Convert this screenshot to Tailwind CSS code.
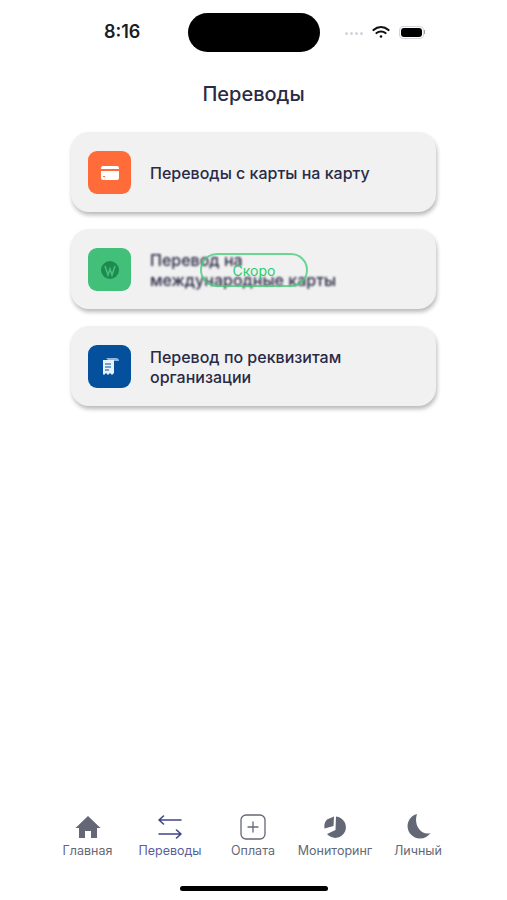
<!DOCTYPE html>
<html lang="ru">
<head>
  <meta charset="UTF-8">
  <meta name="viewport" content="width=device-width, initial-scale=1.0">
  <title>Переводы</title>
  <script src="https://cdn.jsdelivr.net/npm/@tailwindcss/browser@4"></script>
</head>
<body class="bg-white">
  <div class="h-[900px] w-[507px] flex flex-col font-['Inter','Roboto',sans-serif] overflow-hidden">
    <!-- Status bar -->
    <div class="h-[64px] pt-[13px] flex items-start shrink-0">
      <span class="w-[188px] pl-[104px] pt-[8px] text-[18px] leading-[22px] font-semibold text-[#1c1c22]">8:16</span>
      <div class="w-[132px] h-[39px] rounded-full bg-black"></div>
      <div class="flex items-center pl-[25px] pt-[6px] h-[32px]">
        <div class="flex gap-[2px] mr-[9px] mt-[2px]">
          <span class="w-[3px] h-[3px] rounded-full bg-gray-300"></span>
          <span class="w-[3px] h-[3px] rounded-full bg-gray-300"></span>
          <span class="w-[3px] h-[3px] rounded-full bg-gray-300"></span>
          <span class="w-[3px] h-[3px] rounded-full bg-gray-300"></span>
        </div>
        <svg class="w-[18px] h-[14px]" viewBox="0 0 18 14" fill="none" stroke="#111" stroke-width="2.2" stroke-linecap="round">
          <path d="M1.5 5C6 1 12 1 16.5 5"/>
          <path d="M4.5 8C7 6 11 6 13.5 8"/>
          <circle cx="9" cy="11.5" r="1.3" fill="#111" stroke="none"/>
        </svg>
        <div class="ml-[9px] w-[25px] h-[13px] rounded-[4px] border border-gray-300 p-[1px] flex items-center">
          <div class="w-full h-full rounded-[3px] bg-black"></div>
        </div>
        <div class="w-[1px] h-[4px] bg-gray-400"></div>
      </div>
    </div>

    <!-- Title -->
    <h1 class="h-[58px] pt-[15px] text-center text-[20px] leading-[30px] font-medium text-[#2a2a45] shrink-0">Переводы</h1>

    <!-- Cards -->
    <div class="ml-[71px] w-[365px] mt-[10px] flex flex-col gap-[17px] flex-1">
      <div class="h-[80px] rounded-[18px] bg-[#f1f1f2] shadow-[1px_3px_4px_rgba(0,0,0,0.28)] flex items-center pl-[17px] pr-[20px]">
        <div class="w-[43px] h-[43px] mt-[1px] rounded-[9px] bg-[#ff6c3a] flex items-center justify-center shrink-0">
          <svg class="w-[18px] h-[14px]" viewBox="0 0 18 14">
            <path fill="#fff" d="M2 0h14a2 2 0 0 1 2 2v1H0V2a2 2 0 0 1 2-2zM0 5h18v7a2 2 0 0 1-2 2H2a2 2 0 0 1-2-2z"/>
            <rect x="2" y="10" width="2" height="1" fill="#ff6c3a"/>
          </svg>
        </div>
        <span class="ml-[19px] mt-[2px] text-[16px] leading-[20px] font-medium text-[#2a2a45]">Переводы с карты на карту</span>
      </div>

      <div class="relative h-[80px] rounded-[18px] bg-[#f1f1f2] shadow-[1px_3px_4px_rgba(0,0,0,0.28)] flex items-center pl-[17px] pr-[20px]">
        <div class="w-[43px] h-[43px] mt-[1px] rounded-[9px] bg-[#42bf78] flex items-center justify-center shrink-0 blur-[0.6px]">
          <svg class="w-[20px] h-[20px]" viewBox="0 0 20 20">
            <circle cx="10" cy="10" r="9" fill="#1f8a50"/>
            <path d="M5 6l3 9 2-6 2 6 3-9" fill="none" stroke="#42bf78" stroke-width="1.6"/>
          </svg>
        </div>
        <span class="ml-[19px] mt-[2px] text-[16px] leading-[20px] font-medium text-[#2a2a45] blur-[1px]">Перевод на<br>международные карты</span>
        <div class="absolute left-[129px] top-[24px] w-[108px] h-[34px] rounded-full border-2 border-[#3ecb73]/75 flex items-center justify-center text-[14px] text-[#2ecb6a]">Скоро</div>
      </div>

      <div class="h-[80px] rounded-[18px] bg-[#f1f1f2] shadow-[1px_3px_4px_rgba(0,0,0,0.28)] flex items-center pl-[17px] pr-[20px]">
        <div class="w-[43px] h-[43px] mt-[1px] rounded-[9px] bg-[#04509c] flex items-center justify-center shrink-0">
          <svg class="w-[18px] h-[20px]" viewBox="0 0 18 20">
            <path fill="#8ab8e0" d="M5 1h10a3 3 0 0 1 3 3H8z"/>
            <path fill="#e8f0f8" d="M2 3h11v13l-2 2-2-2-2 2-2-2-2 2-1-1z"/>
            <path stroke="#04509c" stroke-width="1.2" d="M4 7h6M4 10h6M4 13h4"/>
          </svg>
        </div>
        <span class="ml-[19px] mt-[2px] text-[16px] leading-[20px] font-medium text-[#2a2a45]">Перевод по реквизитам<br>организации</span>
      </div>
    </div>

    <!-- Tab bar -->
    <div class="h-[47px] ml-[50px] w-[410px] grid grid-cols-[75px_90px_76px_88px_78px] shrink-0 text-[12.5px] leading-[16px] text-[#646876]">
      <div class="flex flex-col items-center">
        <svg class="w-[26px] h-[26px] mt-[1px]" viewBox="0 0 26 26" fill="#646876">
          <path d="M13 2L0.5 14h3.5v10h6v-7h6v7h6V14h3.5z"/>
        </svg>
        <span class="mt-[3px]">Главная</span>
      </div>
      <div class="flex flex-col items-center text-[#5a5f9a]">
        <svg class="w-[26px] h-[26px] mt-[1px]" viewBox="0 0 26 26" fill="none" stroke="#3f4488" stroke-width="1.6" stroke-linecap="round" stroke-linejoin="round">
          <path d="M24 6H2M6.5 2L2 6l4.5 4"/>
          <path d="M2 20h22M19.5 16l4.5 4-4.5 4"/>
        </svg>
        <span class="mt-[3px]">Переводы</span>
      </div>
      <div class="flex flex-col items-center">
        <svg class="w-[26px] h-[26px] mt-[1px]" viewBox="0 0 26 26" fill="none" stroke="#646876" stroke-width="1.3" stroke-linecap="round">
          <rect x="1" y="1" width="24" height="24" rx="5"/>
          <path d="M13 8v10M8 13h10"/>
        </svg>
        <span class="mt-[3px]">Оплата</span>
      </div>
      <div class="flex flex-col items-center">
        <svg class="w-[26px] h-[26px] mt-[1px]" viewBox="0 0 26 26" fill="#646876">
          <path d="M14 2.5A10.7 10.7 0 1 1 5 20l8.5-4z"/>
          <path d="M12 2.5L5 5.5a10.7 10.7 0 0 0-2.5 9l9-2.5z"/>
        </svg>
        <span class="mt-[3px] whitespace-nowrap">Мониторинг</span>
      </div>
      <div class="flex flex-col items-center">
        <svg class="w-[26px] h-[26px]" viewBox="0 0 26 26" fill="#646876">
          <path d="M12 1A12.5 12.5 0 1 0 25.5 20C17 23 8 13 12 1z"/>
        </svg>
        <span class="mt-[4px]">Личный</span>
      </div>
    </div>

    <!-- Home indicator -->
    <div class="h-[40px] flex justify-center pt-[26px] shrink-0">
      <div class="w-[148px] h-[5px] rounded-full bg-black"></div>
    </div>
  </div>
</body>
</html>
